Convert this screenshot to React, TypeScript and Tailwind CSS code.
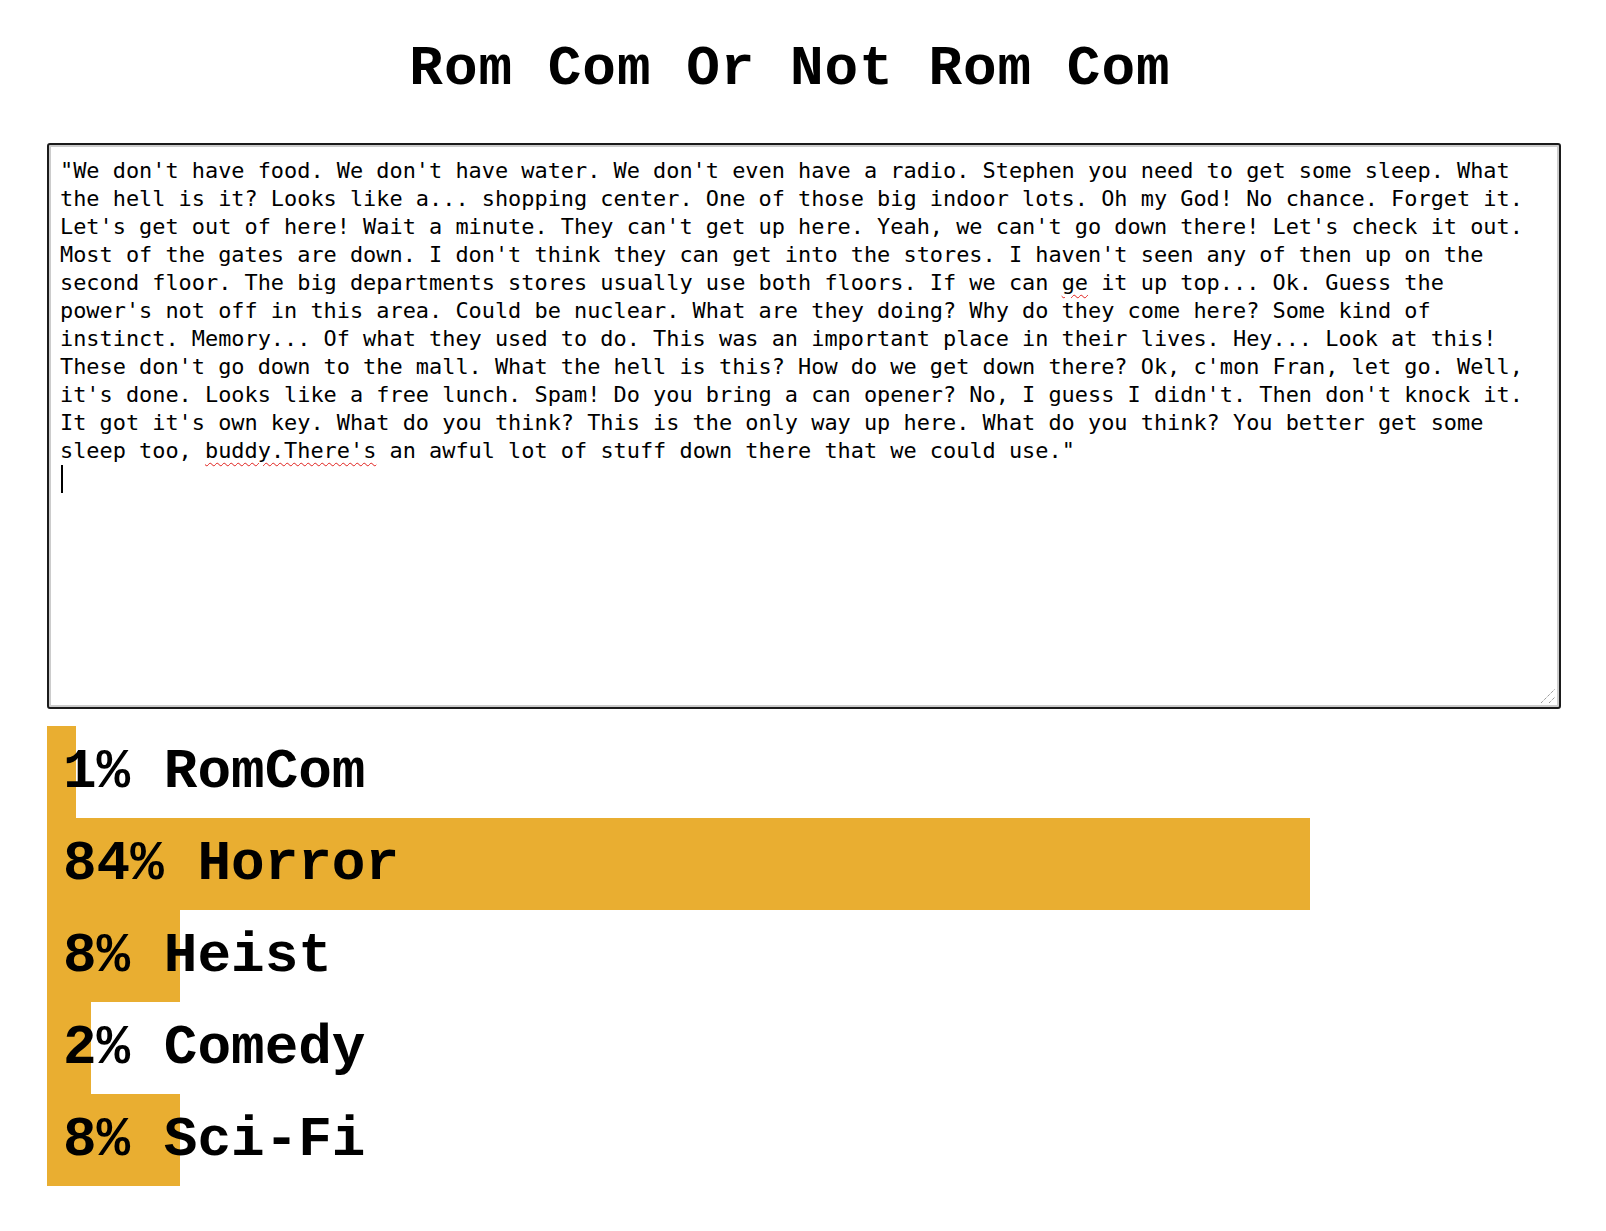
import React from "react";

type Genre = {
  label: string;
  pct: number;
  width: number;
};

const genres: Genre[] = [
  { label: "RomCom", pct: 1, width: 29 },
  { label: "Horror", pct: 84, width: 1263 },
  { label: "Heist", pct: 8, width: 133 },
  { label: "Comedy", pct: 2, width: 44 },
  { label: "Sci-Fi", pct: 8, width: 133 },
];

const Typo: React.FC<{ children: React.ReactNode }> = ({ children }) => (
  <span className="underline decoration-wavy decoration-[#e0201c] decoration-1 underline-offset-[4px]">{children}</span>
);

const ScriptBox: React.FC = () => {
  return (
    <div className="relative h-[566px] w-full rounded-[3px] border-2 border-[#1b1b1b] bg-white pt-[12px] pr-[11px] pl-[11px] shadow-[inset_0_0_0_2px_#cccccc]">
      <div className="font-['DejaVu_Sans_Mono',monospace] text-[21.9px] leading-[28px] text-black whitespace-pre-wrap break-words">
        "We don't have food. We don't have water. We don't even have a radio. Stephen you need to get some sleep. What
        the hell is it? Looks like a... shopping center. One of those big indoor lots. Oh my God! No chance. Forget it.
        Let's get out of here! Wait a minute. They can't get up here. Yeah, we can't go down there! Let's check it out.
        Most of the gates are down. I don't think they can get into the stores. I haven't seen any of then up on the
        second floor. The big departments stores usually use both floors. If we can <Typo>ge</Typo> it up top... Ok. Guess
        the power's not off in this area. Could be nuclear. What are they doing? Why do they come here? Some kind of
        instinct. Memory... Of what they used to do. This was an important place in their lives. Hey... Look at this!
        These don't go down to the mall. What the hell is this? How do we get down there? Ok, c'mon Fran, let go. Well,
        it's done. Looks like a free lunch. Spam! Do you bring a can opener? No, I guess I didn't. Then don't knock it.
        It got it's own key. What do you think? This is the only way up here. What do you think? You better get some
        sleep too, <Typo>buddy.There's</Typo> an awful lot of stuff down there that we could use."
      </div>
      <div className="ml-[1px] h-[28px] w-[2px] bg-black" />
      <svg className="absolute right-[2px] bottom-[2px]" width="18" height="18" viewBox="0 0 18 18">
        <path d="M2 16 L16 2 M10 16 L16 10" stroke="#707070" strokeWidth="1" strokeDasharray="1 1" />
      </svg>
    </div>
  );
};

const GenreBar: React.FC<{ genre: Genre }> = ({ genre }) => (
  <div
    className="flex h-[92px] items-center bg-[#e9ae31] pl-[16px] whitespace-nowrap"
    style={{ width: genre.width }}
  >
    <span className="leading-[64px]">
      {genre.pct}% {genre.label}
    </span>
  </div>
);

export default function App() {
  return (
    <div className="min-h-screen bg-white text-black">
      <div className="ml-[47px] w-[1514px] pt-[37px] pb-[46px]">
        <h1 className="mb-[42px] pr-[28px] text-center font-['Liberation_Mono','Courier_New',monospace] text-[56px] leading-[64px] font-bold tracking-[1px]">
          Rom Com Or Not Rom Com
        </h1>
        <ScriptBox />
        <div className="mt-[17px] flex flex-col font-['Liberation_Mono','Courier_New',monospace] text-[56px] font-bold">
          {genres.map((genre) => (
            <GenreBar key={genre.label} genre={genre} />
          ))}
        </div>
      </div>
    </div>
  );
}
